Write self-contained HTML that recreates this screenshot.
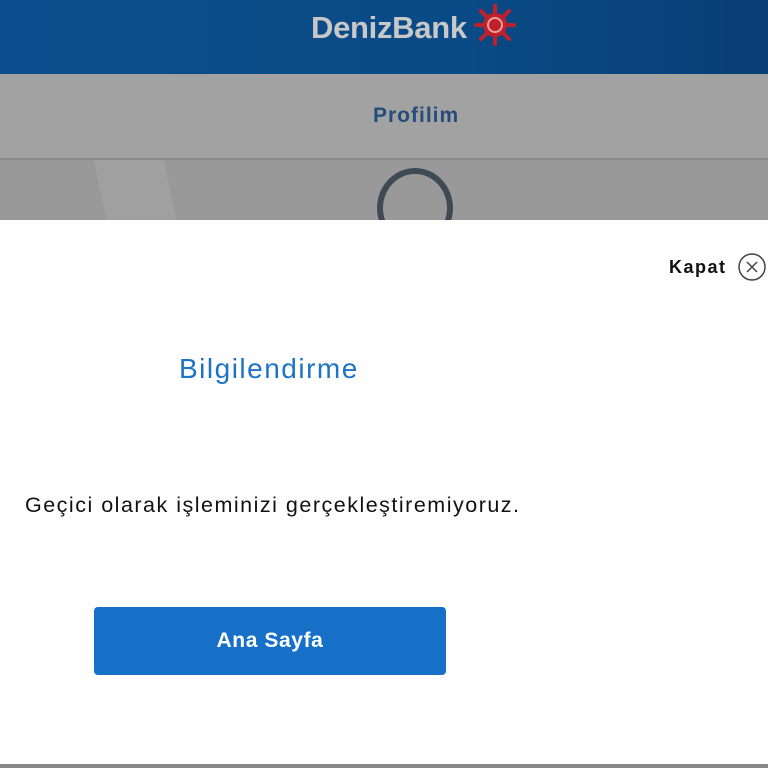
<!DOCTYPE html>
<html><head><meta charset="utf-8"><style>
*{margin:0;padding:0;box-sizing:border-box}
body{width:768px;height:768px;position:relative;overflow:hidden;background:#fefefe;font-family:"Liberation Sans","DejaVu Sans",sans-serif}
.hdr{position:absolute;left:0;top:0;width:768px;height:74px;background:linear-gradient(90deg,#0b4d8c,#0a4a86 60%,#083f74)}
.logo{position:absolute;left:311px;top:10px;font-size:31px;font-weight:bold;color:#c8c8c8;letter-spacing:-0.3px}
.band{position:absolute;left:0;top:74px;width:768px;height:86px;background:#a2a2a2;border-bottom:2px solid #8a8a8a}
.band span{position:absolute;left:373px;top:30px;font-size:21px;color:#254d7a;font-weight:bold;letter-spacing:1px}
.g2{position:absolute;left:0;top:160px;width:768px;height:60px;background:#999}
.sheet{position:absolute;left:0;top:220px;width:768px;height:544px;background:#fefefe}
.bot{position:absolute;left:0;top:764px;width:768px;height:4px;background:#878787}
.kap{position:absolute;left:669px;top:257px;font-size:18px;font-weight:bold;color:#111;letter-spacing:1.5px}
.tit{position:absolute;left:179px;top:353px;font-size:28px;color:#1e74c4;letter-spacing:1.5px}
.msg{position:absolute;left:25px;top:493px;font-size:21.5px;color:#111;letter-spacing:1.5px;white-space:nowrap}
.btn{position:absolute;left:94px;top:607px;width:352px;height:68px;background:#1670c8;border-radius:4px;color:#fff;font-size:21px;font-weight:bold;text-align:center;line-height:68px;letter-spacing:0.6px}
</style></head><body>
<div class="hdr"><div class="logo">DenizBank</div>
<svg style="position:absolute;left:473px;top:3px" width="44" height="44" viewBox="0 0 44 44"><g stroke="#c0202a" stroke-width="4" stroke-linecap="round"><line x1="22" y1="3" x2="22" y2="41"/><line x1="3" y1="22" x2="41" y2="22"/><line x1="8" y1="8" x2="36" y2="36"/><line x1="36" y1="8" x2="8" y2="36"/></g><circle cx="22" cy="22" r="12" fill="#c0202a"/><circle cx="22" cy="22" r="7" fill="none" stroke="#e8a0a0" stroke-width="2"/></svg>
</div>
<div class="band"><span>Profilim</span></div>
<div class="g2">
<div style="position:absolute;left:100px;top:0;width:70px;height:60px;background:#a0a0a0;transform:skewX(12deg)"></div>
<div style="position:absolute;left:377px;top:8px;width:76px;height:80px;border:6px solid #3f4a55;border-radius:50%"></div>
</div>
<div class="sheet"></div>
<div class="kap">Kapat</div>
<svg style="position:absolute;left:737px;top:252px" width="30" height="30" viewBox="0 0 30 30"><circle cx="15" cy="15" r="13" fill="none" stroke="#444" stroke-width="1.5"/><path d="M10 10L20 20M20 10L10 20" stroke="#444" stroke-width="1.5"/></svg>
<div class="tit">Bilgilendirme</div>
<div class="msg">Geçici olarak işleminizi gerçekleştiremiyoruz.</div>
<div class="btn">Ana Sayfa</div>
<div class="bot"></div>
</body></html>
